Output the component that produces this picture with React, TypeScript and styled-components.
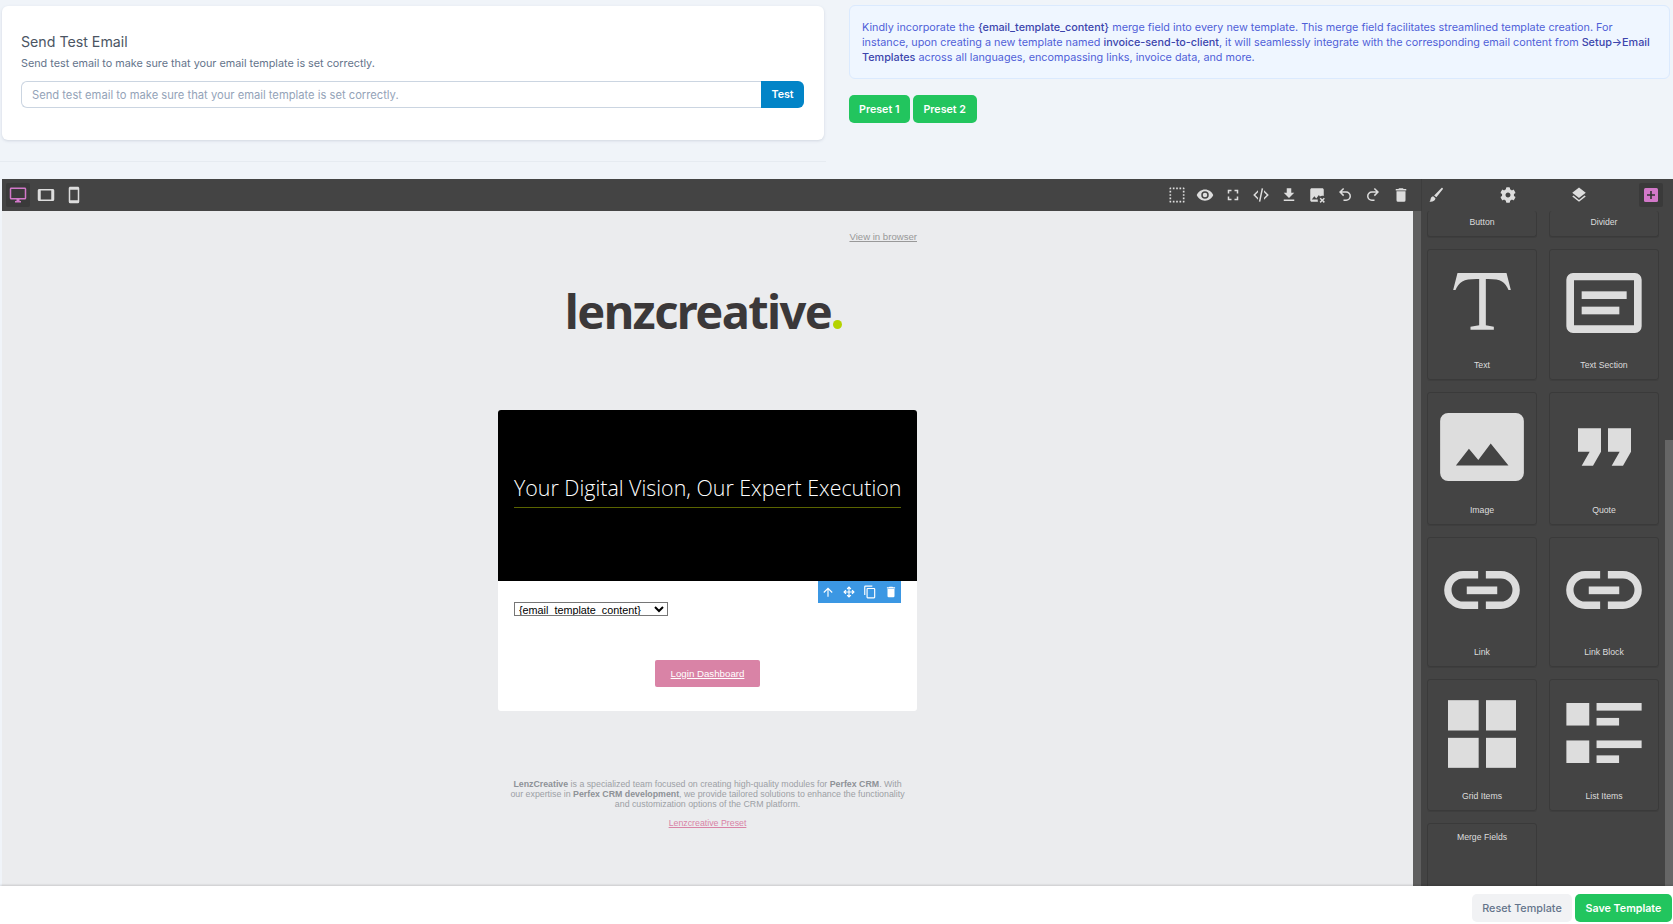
import * as React from "react";
import styled, { createGlobalStyle } from "styled-components";
import { FaCog } from "react-icons/fa";

const GlobalStyle = createGlobalStyle`
  html, body {
    margin: 0;
    padding: 0;
    height: 100%;
    overflow: hidden;
    background: #f0f4f9;
    font-family: "Inter", sans-serif;
  }
  * { box-sizing: border-box; }
`;

const mdi = {
  monitor: "M21,16H3V4H21M21,2H3C1.89,2 1,2.89 1,4V16A2,2 0 0,0 3,18H10V20H8V22H16V20H14V18H21A2,2 0 0,0 23,16V4C23,2.89 22.1,2 21,2Z",
  tablet: "M19,18H5V6H19M21,4H3C1.89,4 1,4.89 1,6V18A2,2 0 0,0 3,20H21A2,2 0 0,0 23,18V6C23,4.89 22.1,4 21,4Z",
  phone: "M17,19H7V5H17M17,1H7C5.89,1 5,1.89 5,3V21A2,2 0 0,0 7,23H17A2,2 0 0,0 19,21V3C19,1.89 18.1,1 17,1Z",
  select: "M4,3H5V5H3V4A1,1 0 0,1 4,3M20,3A1,1 0 0,1 21,4V5H19V3H20M15,5V3H17V5H15M11,5V3H13V5H11M7,5V3H9V5H7M21,20A1,1 0 0,1 20,21H19V19H21V20M15,21V19H17V21H15M11,21V19H13V21H11M7,21V19H9V21H7M4,21A1,1 0 0,1 3,20V19H5V21H4M3,15H5V17H3V15M21,15V17H19V15H21M3,11H5V13H3V11M21,11V13H19V11H21M3,7H5V9H3V7M21,7V9H19V7H21Z",
  eye: "M12,9A3,3 0 0,0 9,12A3,3 0 0,0 12,15A3,3 0 0,0 15,12A3,3 0 0,0 12,9M12,17A5,5 0 0,1 7,12A5,5 0 0,1 12,7A5,5 0 0,1 17,12A5,5 0 0,1 12,17M12,4.5C7,4.5 2.73,7.61 1,12C2.73,16.39 7,19.5 12,19.5C17,19.5 21.27,16.39 23,12C21.27,7.61 17,4.5 12,4.5Z",
  fullscreen: "M5,5H10V7H7V10H5V5M14,5H19V10H17V7H14V5M17,14H19V19H14V17H17V14M10,17V19H5V14H7V17H10Z",
  xml: "M12.89,3L14.85,3.4L11.11,21L9.15,20.6L12.89,3M19.59,12L16,8.41V5.58L22.42,12L16,18.41V15.58L19.59,12M1.58,12L8,5.58V8.41L4.41,12L8,15.58V18.41L1.58,12Z",
  download: "M5,20H19V18H5M19,9H15V3H9V9H5L12,16L19,9Z",
  imageRemove: "M13.3 21H5C3.9 21 3 20.1 3 19V5C3 3.9 3.9 3 5 3H19C20.1 3 21 3.9 21 5V13.3C20.4 13.1 19.7 13 19 13C17.9 13 16.8 13.3 15.9 13.9L14.5 12L11 16.5L8.5 13.5L5 18H13.1C13 18.3 13 18.7 13 19C13 19.7 13.1 20.4 13.3 21M21.1 15.5L19 17.6L16.9 15.5L15.5 16.9L17.6 19L15.5 21.1L16.9 22.5L19 20.4L21.1 22.5L22.5 21.1L20.4 19L22.5 16.9L21.1 15.5Z",
  undo: "M13.5,7A6.5,6.5 0 0,1 20,13.5A6.5,6.5 0 0,1 13.5,20H10V18H13.5C16,18 18,16 18,13.5C18,11 16,9 13.5,9H7.83L10.91,12.09L9.5,13.5L4,8L9.5,2.5L10.92,3.91L7.83,7H13.5Z",
  redo: "M10.5,7A6.5,6.5 0 0,0 4,13.5A6.5,6.5 0 0,0 10.5,20H14V18H10.5C8,18 6,16 6,13.5C6,11 8,9 10.5,9H16.17L13.09,12.09L14.5,13.5L20,8L14.5,2.5L13.08,3.91L16.17,7H10.5Z",
  trash: "M19,4H15.5L14.5,3H9.5L8.5,4H5V6H19M6,19A2,2 0 0,0 8,21H16A2,2 0 0,0 18,19V7H6V19Z",
  layers: "M12,16L19.36,10.27L21,9L12,2L3,9L4.63,10.27M12,18.54L4.62,12.81L3,14.07L12,21.07L21,14.07L19.37,12.8L12,18.54Z",
  brush: "M20.5 2.5C21.3 2.9 21.5 3.6 21 4.3L12.5 15 9.5 12.5 19 3C19.4 2.6 20 2.4 20.5 2.5ZM8.2 13.8L11.3 16.3C11 19.5 8 21.5 3 21C4.8 19.8 4.4 18 5 16.5 5.5 15 6.8 14 8.2 13.8Z",
  arrowUp: "M13,20H11V8L5.5,13.5L4.08,12.08L12,4.16L19.92,12.08L18.5,13.5L13,8V20Z",
  move: "M13,11H18L16.5,9.5L17.92,8.08L21.84,12L17.92,15.92L16.5,14.5L18,13H13V18L14.5,16.5L15.92,17.92L12,21.84L8.08,17.92L9.5,16.5L11,18V13H6L7.5,14.5L6.08,15.92L2.16,12L6.08,8.08L7.5,9.5L6,11H11V6L9.5,7.5L8.08,6.08L12,2.16L15.92,6.08L14.5,7.5L13,6V11Z",
  copy: "M19,21H8V7H19M19,5H8A2,2 0 0,0 6,7V21A2,2 0 0,0 8,23H19A2,2 0 0,0 21,21V7A2,2 0 0,0 19,5M16,1H4A2,2 0 0,0 2,3V17H4V3H16V1Z",
};

const Page = styled.div`
  width: 1673px;
  height: 924px;
  display: flex;
  flex-direction: column;
  overflow: hidden;
`;

const TopRow = styled.div`
  height: 179px;
  flex: none;
  display: grid;
  grid-template-columns: 822px 821px;
  gap: 25px;
  padding-left: 2px;
`;

const Card = styled.div`
  margin-top: 6px;
  height: 134px;
  background: #fff;
  border-radius: 6px;
  box-shadow: 0 1px 3px rgba(100, 116, 139, 0.22);
  padding: 27px 20px 0 19px;
`;

const CardTitle = styled.h4`
  margin: 0;
  font-size: 14.2px;
  line-height: 17px;
  font-weight: 400;
  color: #4b5563;
`;

const CardText = styled.p`
  margin: 6px 0 0;
  font-size: 10.8px;
  line-height: 16px;
  color: #64748b;
`;

const InputGroup = styled.div`
  display: flex;
  height: 27px;
  margin-top: 9px;
`;

const TestInput = styled.input`
  flex: 1;
  min-width: 0;
  height: 100%;
  border: 1px solid #cbd5e1;
  border-right: 0;
  border-radius: 6px 0 0 6px;
  padding: 0 10px;
  font: 400 11.2px "Inter", sans-serif;
  background: #fff;
  outline: none;
  &::placeholder {
    color: #94a3b8;
    opacity: 1;
  }
`;

const TestButton = styled.button`
  width: 43px;
  height: 100%;
  border: 0;
  border-radius: 0 6px 6px 0;
  background: #0284c7;
  color: #fff;
  font: 600 10.7px "Inter", sans-serif;
  padding: 0;
`;

const Rule = styled.div`
  margin: 21px -2px 0;
  height: 1px;
  background: #e6ebf1;
`;

const Notice = styled.div`
  margin-top: 5px;
  height: 74px;
  background: #eff6ff;
  border: 1px solid #dbeafe;
  border-radius: 6px;
  padding: 14px 16px 0 12px;
  font-size: 10.8px;
  line-height: 15px;
  color: #4f5fd8;
  b {
    font-weight: 500;
    color: #3b45ad;
  }
`;

const PresetRow = styled.div`
  display: flex;
  gap: 3px;
  margin-top: 16px;
`;

const GreenButton = styled.button`
  height: 28px;
  padding: 0 11px 0 10px;
  border: 0;
  border-radius: 5px;
  background: #22c55e;
  color: #fff;
  font: 600 10.7px "Inter", sans-serif;
  white-space: nowrap;
`;

const Editor = styled.div`
  flex: 1;
  min-height: 0;
  display: flex;
  flex-direction: column;
  margin-left: 2px;
`;

const Toolbar = styled.div`
  height: 32px;
  flex: none;
  display: flex;
  align-items: center;
  background: #444;
  position: relative;
  z-index: 1;
`;

const DeviceGroup = styled.div`
  display: flex;
  gap: 4px;
  padding-left: 4px;
`;

const ActionGroup = styled.div`
  display: flex;
  gap: 4px;
  margin-left: auto;
  padding-right: 8px;
`;

const PanelTabs = styled.div`
  width: 252px;
  height: 100%;
  display: flex;
  align-items: center;
  justify-content: space-between;
  padding: 0 10px 0 2px;
  border-left: 1px solid #3d3d3d;
`;

const ToolButton = styled.span<{ $active?: boolean; $accent?: boolean }>`
  width: 24px;
  height: 24px;
  flex: none;
  display: flex;
  align-items: center;
  justify-content: center;
  border-radius: 2px;
  color: ${(p) => (p.$accent ? "#d278c9" : "#ddd")};
  background: ${(p) => (p.$active ? "#3a3a3a" : "transparent")};
`;

const Workspace = styled.div`
  flex: 1;
  min-height: 0;
  display: flex;
`;

const Canvas = styled.div`
  width: 1411px;
  flex: none;
  background: #ebecee;
  display: flex;
  flex-direction: column;
  align-items: center;
  overflow: hidden;
`;

const ViewLink = styled.a`
  width: 419px;
  margin-top: 20px;
  text-align: right;
  font: 9.6px/12px "Liberation Sans", Arial, sans-serif;
  color: #999;
  text-decoration: underline;
`;

const Logo = styled.div`
  margin: 38px 8px 0 0;
  height: 60px;
  display: flex;
  align-items: baseline;
  font: 700 47px/60px "Noto Sans", sans-serif;
  letter-spacing: -1.6px;
  color: #3b3839;
`;

const LogoDot = styled.span`
  width: 9px;
  height: 9px;
  margin-left: 2px;
  border-radius: 50%;
  background: #b5d300;
`;

const MailCard = styled.div`
  position: relative;
  width: 419px;
  height: 301px;
  margin-top: 69px;
  background: #fff;
  border-radius: 3px;
  overflow: hidden;
  flex: none;
`;

const MailHero = styled.div`
  height: 171px;
  background: #000;
  padding: 62px 16px 0;
`;

const HeroTitle = styled.div`
  font: 300 21.4px/32px "Open Sans", sans-serif;
  color: #fff;
  text-align: center;
  white-space: nowrap;
  padding-bottom: 3px;
  border-bottom: 1px solid #5a6400;
`;

const MailBody = styled.div`
  padding: 21px 16px 0;
`;

const MergeSelect = styled.select`
  display: block;
  width: 154px;
  height: 14px;
  padding: 0;
  border: 1px solid #767676;
  border-radius: 0;
  background: #fff;
  color: #000;
  font: 10.8px/12px "Liberation Sans", Arial, sans-serif;
`;

const LoginButton = styled.a`
  display: block;
  width: 105px;
  height: 27px;
  margin: 44px auto 0;
  background: #d983a6;
  border-radius: 2px;
  color: #fff;
  font: 9.7px/27px "Liberation Sans", Arial, sans-serif;
  text-align: center;
  text-decoration: underline;
`;

const BlockTools = styled.div`
  position: absolute;
  top: 171px;
  left: 320px;
  width: 83px;
  height: 22px;
  background: #3b97e3;
  color: #fff;
  display: flex;
  align-items: center;
  justify-content: space-between;
  padding: 0 3px;
`;

const MailFooter = styled.div`
  width: 419px;
  margin-top: 68px;
  padding: 0 10px;
  text-align: center;
  font: 8.8px/10px "Liberation Sans", Arial, sans-serif;
  color: #9ca0a5;
  b {
    color: #8e9297;
  }
`;

const FooterLink = styled.a`
  display: block;
  margin-top: 9px;
  color: #d983a6;
  text-decoration: underline;
  line-height: 10px;
`;

const Gutter = styled.div`
  width: 8px;
  flex: none;
  background: #5f5f5f;
`;

const BlocksPanel = styled.div`
  width: 244px;
  flex: none;
  background: #444;
  overflow: hidden;
  display: grid;
  grid-template-columns: 110px 110px;
  justify-content: space-between;
  grid-auto-rows: min-content;
  row-gap: 12px;
  padding: 0 6px;
`;

const Block = styled.div<{ $height: number; $clipped?: boolean; $labelTop?: boolean }>`
  height: ${(p) => p.$height}px;
  border: 1px solid #3a3a3a;
  border-top-width: ${(p) => (p.$clipped ? 0 : 1)}px;
  border-radius: 3px;
  box-shadow: 0 1px 0 rgba(0, 0, 0, 0.08);
  display: flex;
  flex-direction: column;
  align-items: center;
  color: #ddd;
  ${(p) => (p.$labelTop ? "padding-top: 8px;" : "")}
`;

const BlockArt = styled.div<{ $top: number }>`
  margin-top: ${(p) => p.$top}px;
  flex: none;
  display: flex;
  line-height: 0;
`;

const BlockLabel = styled.div`
  margin-top: auto;
  margin-bottom: 8px;
  font: 8.7px/11px "Liberation Sans", Arial, sans-serif;
  color: #ddd;
`;

const TopLabel = styled.div`
  font: 8.7px/11px "Liberation Sans", Arial, sans-serif;
  color: #ddd;
`;

const Scrollbar = styled.div`
  width: 8px;
  flex: none;
  background: #444;
  display: flex;
  flex-direction: column;
`;

const ScrollThumb = styled.div`
  margin-top: 229px;
  flex: 1;
  background: #666;
`;

const BottomBar = styled.div`
  height: 38px;
  flex: none;
  background: #fff;
  box-shadow: 0 -1px 2px rgba(0, 0, 0, 0.15);
  position: relative;
  display: flex;
  justify-content: flex-end;
  gap: 3px;
  padding: 8px 1px 2px 0;
`;

const ResetButton = styled.button`
  width: 100px;
  height: 28px;
  padding: 0;
  border: 0;
  border-radius: 5px;
  background: #f1f2f4;
  color: #64748b;
  font: 500 10.8px "Inter", sans-serif;
`;

const SaveButton = styled(GreenButton)`
  width: 97px;
  padding: 0;
`;

const Icon: React.FC<{ d: string; size?: number }> = ({ d, size = 18 }) => (
  <svg width={size} height={size} viewBox="0 0 24 24" fill="currentColor">
    <path d={d} />
  </svg>
);

const BlockSvg: React.FC<{ box: string; w: number; h: number; children: React.ReactNode }> = ({ box, w, h, children }) => (
  <svg width={w} height={h} viewBox={box} fill="currentColor">
    {children}
  </svg>
);

function LinkArt() {
  return (
    <svg width="76" height="38" viewBox="133 153 227 113" fill="currentColor">
      <path d="M235 153H190A56.5 56.5 0 0 0 190 266H235V244H190A34.5 34.5 0 0 1 190 175H235Z" />
      <path d="M258 153H303A56.5 56.5 0 0 1 303 266H258V244H303A34.5 34.5 0 0 0 303 175H258Z" />
      <rect x="201" y="199" width="91" height="23" />
    </svg>
  );
}

const App: React.FC = () => {
  return (
    <Page>
      <GlobalStyle />
      <TopRow>
        <div>
          <Card>
            <CardTitle>Send Test Email</CardTitle>
            <CardText>Send test email to make sure that your email template is set correctly.</CardText>
            <InputGroup>
              <TestInput placeholder="Send test email to make sure that your email template is set correctly." />
              <TestButton>Test</TestButton>
            </InputGroup>
          </Card>
          <Rule />
        </div>
        <div>
          <Notice>
            Kindly incorporate the <b>{"{email_template_content}"}</b> merge field into every new template. This merge
            field facilitates streamlined template creation. For instance, upon creating a new template named{" "}
            <b>invoice-send-to-client</b>, it will seamlessly integrate with the corresponding email content from{" "}
            <b>Setup→Email Templates</b> across all languages, encompassing links, invoice data, and more.
          </Notice>
          <PresetRow>
            <GreenButton>Preset 1</GreenButton>
            <GreenButton>Preset 2</GreenButton>
          </PresetRow>
        </div>
      </TopRow>

      <Editor>
        <Toolbar>
          <DeviceGroup>
            <ToolButton $active $accent><Icon d={mdi.monitor} /></ToolButton>
            <ToolButton><Icon d={mdi.tablet} /></ToolButton>
            <ToolButton><Icon d={mdi.phone} /></ToolButton>
          </DeviceGroup>
          <ActionGroup>
            <ToolButton><Icon d={mdi.select} size={20} /></ToolButton>
            <ToolButton><Icon d={mdi.eye} /></ToolButton>
            <ToolButton><Icon d={mdi.fullscreen} /></ToolButton>
            <ToolButton><Icon d={mdi.xml} /></ToolButton>
            <ToolButton><Icon d={mdi.download} /></ToolButton>
            <ToolButton><Icon d={mdi.imageRemove} /></ToolButton>
            <ToolButton><Icon d={mdi.undo} /></ToolButton>
            <ToolButton><Icon d={mdi.redo} /></ToolButton>
            <ToolButton><Icon d={mdi.trash} /></ToolButton>
          </ActionGroup>
          <PanelTabs>
            <ToolButton><Icon d={mdi.brush} /></ToolButton>
            <ToolButton><FaCog size={16} /></ToolButton>
            <ToolButton><Icon d={mdi.layers} /></ToolButton>
            <ToolButton $active>
              <svg width="14" height="14" viewBox="0 0 14 14">
                <rect width="14" height="14" rx="1.5" fill="#d278c9" />
                <path d="M6.2 3h1.6v3.2H11v1.6H7.8V11H6.2V7.8H3V6.2h3.2z" fill="#333" />
              </svg>
            </ToolButton>
          </PanelTabs>
        </Toolbar>

        <Workspace>
          <Canvas>
            <ViewLink>View in browser</ViewLink>
            <Logo>lenzcreative<LogoDot /></Logo>
            <MailCard>
              <MailHero>
                <HeroTitle>Your Digital Vision, Our Expert Execution</HeroTitle>
              </MailHero>
              <MailBody>
                <MergeSelect defaultValue="content">
                  <option value="content">{"{email_template_content}"}</option>
                </MergeSelect>
                <LoginButton>Login Dashboard</LoginButton>
              </MailBody>
              <BlockTools>
                <Icon d={mdi.arrowUp} size={14} />
                <Icon d={mdi.move} size={14} />
                <Icon d={mdi.copy} size={14} />
                <Icon d={mdi.trash} size={14} />
              </BlockTools>
            </MailCard>
            <MailFooter>
              <b>LenzCreative</b> is a specialized team focused on creating high-quality modules for <b>Perfex CRM</b>. With
              our expertise in <b>Perfex CRM development</b>, we provide tailored solutions to enhance the functionality
              and customization options of the CRM platform.
              <FooterLink>Lenzcreative Preset</FooterLink>
            </MailFooter>
          </Canvas>
          <Gutter />
          <BlocksPanel>
            <Block $height={26} $clipped><BlockLabel>Button</BlockLabel></Block>
            <Block $height={26} $clipped><BlockLabel>Divider</BlockLabel></Block>

            <Block $height={131}>
              <BlockArt $top={23}>
                <BlockSvg box="160 205 173 171" w={58} h={57}>
                  <path d="M173 205H320L333 256H326C316 232 304 223 265 223H258V362L282 366V375H212V366L238 362V223H230C190 223 178 232 167 256H160Z" />
                </BlockSvg>
              </BlockArt>
              <BlockLabel>Text</BlockLabel>
            </Block>
            <Block $height={131}>
              <BlockArt $top={23}>
                <BlockSvg box="499 205 226 180" w={76} h={60}>
                  <path fillRule="evenodd" d="M519 205H705A20 20 0 0 1 725 225V365A20 20 0 0 1 705 385H519A20 20 0 0 1 499 365V225A20 20 0 0 1 519 205ZM522 227V362H702V227Z" />
                  <rect x="545" y="260" width="135" height="23" />
                  <rect x="545" y="306" width="113" height="23" />
                </BlockSvg>
              </BlockArt>
              <BlockLabel>Text Section</BlockLabel>
            </Block>

            <Block $height={133}>
              <BlockArt $top={20}>
                <BlockSvg box="121 625 250 203" w={84} h={68}>
                  <path fillRule="evenodd" d="M145 625H347A24 24 0 0 1 371 649V804A24 24 0 0 1 347 828H145A24 24 0 0 1 121 804V649A24 24 0 0 1 145 625ZM168 782H325L272 716L235 765L207 732Z" />
                </BlockSvg>
              </BlockArt>
              <BlockLabel>Image</BlockLabel>
            </Block>
            <Block $height={133}>
              <BlockArt $top={35}>
                <BlockSvg box="533 670 159 112" w={53} h={38}>
                  <path d="M533 670H602V740L578 782H544L568 740H533Z" />
                  <path d="M623 670H692V740L668 782H634L658 740H623Z" />
                </BlockSvg>
              </BlockArt>
              <BlockLabel>Quote</BlockLabel>
            </Block>

            <Block $height={130}>
              <BlockArt $top={33}>
                <LinkArt />
              </BlockArt>
              <BlockLabel>Link</BlockLabel>
            </Block>
            <Block $height={130}>
              <BlockArt $top={33}>
                <LinkArt />
              </BlockArt>
              <BlockLabel>Link Block</BlockLabel>
            </Block>

            <Block $height={132}>
              <BlockArt $top={20}>
                <BlockSvg box="144 541 204 203" w={68} h={68}>
                  <rect x="144" y="541" width="92" height="91" />
                  <rect x="258" y="541" width="90" height="91" />
                  <rect x="144" y="654" width="92" height="90" />
                  <rect x="258" y="654" width="90" height="90" />
                </BlockSvg>
              </BlockArt>
              <BlockLabel>Grid Items</BlockLabel>
            </Block>
            <Block $height={132}>
              <BlockArt $top={23}>
                <BlockSvg box="499 552 227 181" w={76} h={60}>
                  <rect x="499" y="552" width="69" height="68" />
                  <rect x="590" y="552" width="136" height="23" />
                  <rect x="590" y="597" width="68" height="23" />
                  <rect x="499" y="665" width="69" height="68" />
                  <rect x="590" y="665" width="136" height="23" />
                  <rect x="590" y="710" width="68" height="23" />
                </BlockSvg>
              </BlockArt>
              <BlockLabel>List Items</BlockLabel>
            </Block>

            <Block $height={131} $labelTop><TopLabel>Merge Fields</TopLabel></Block>
          </BlocksPanel>
          <Scrollbar>
            <ScrollThumb />
          </Scrollbar>
        </Workspace>
      </Editor>

      <BottomBar>
        <ResetButton>Reset Template</ResetButton>
        <SaveButton>Save Template</SaveButton>
      </BottomBar>
    </Page>
  );
};

export default App;
